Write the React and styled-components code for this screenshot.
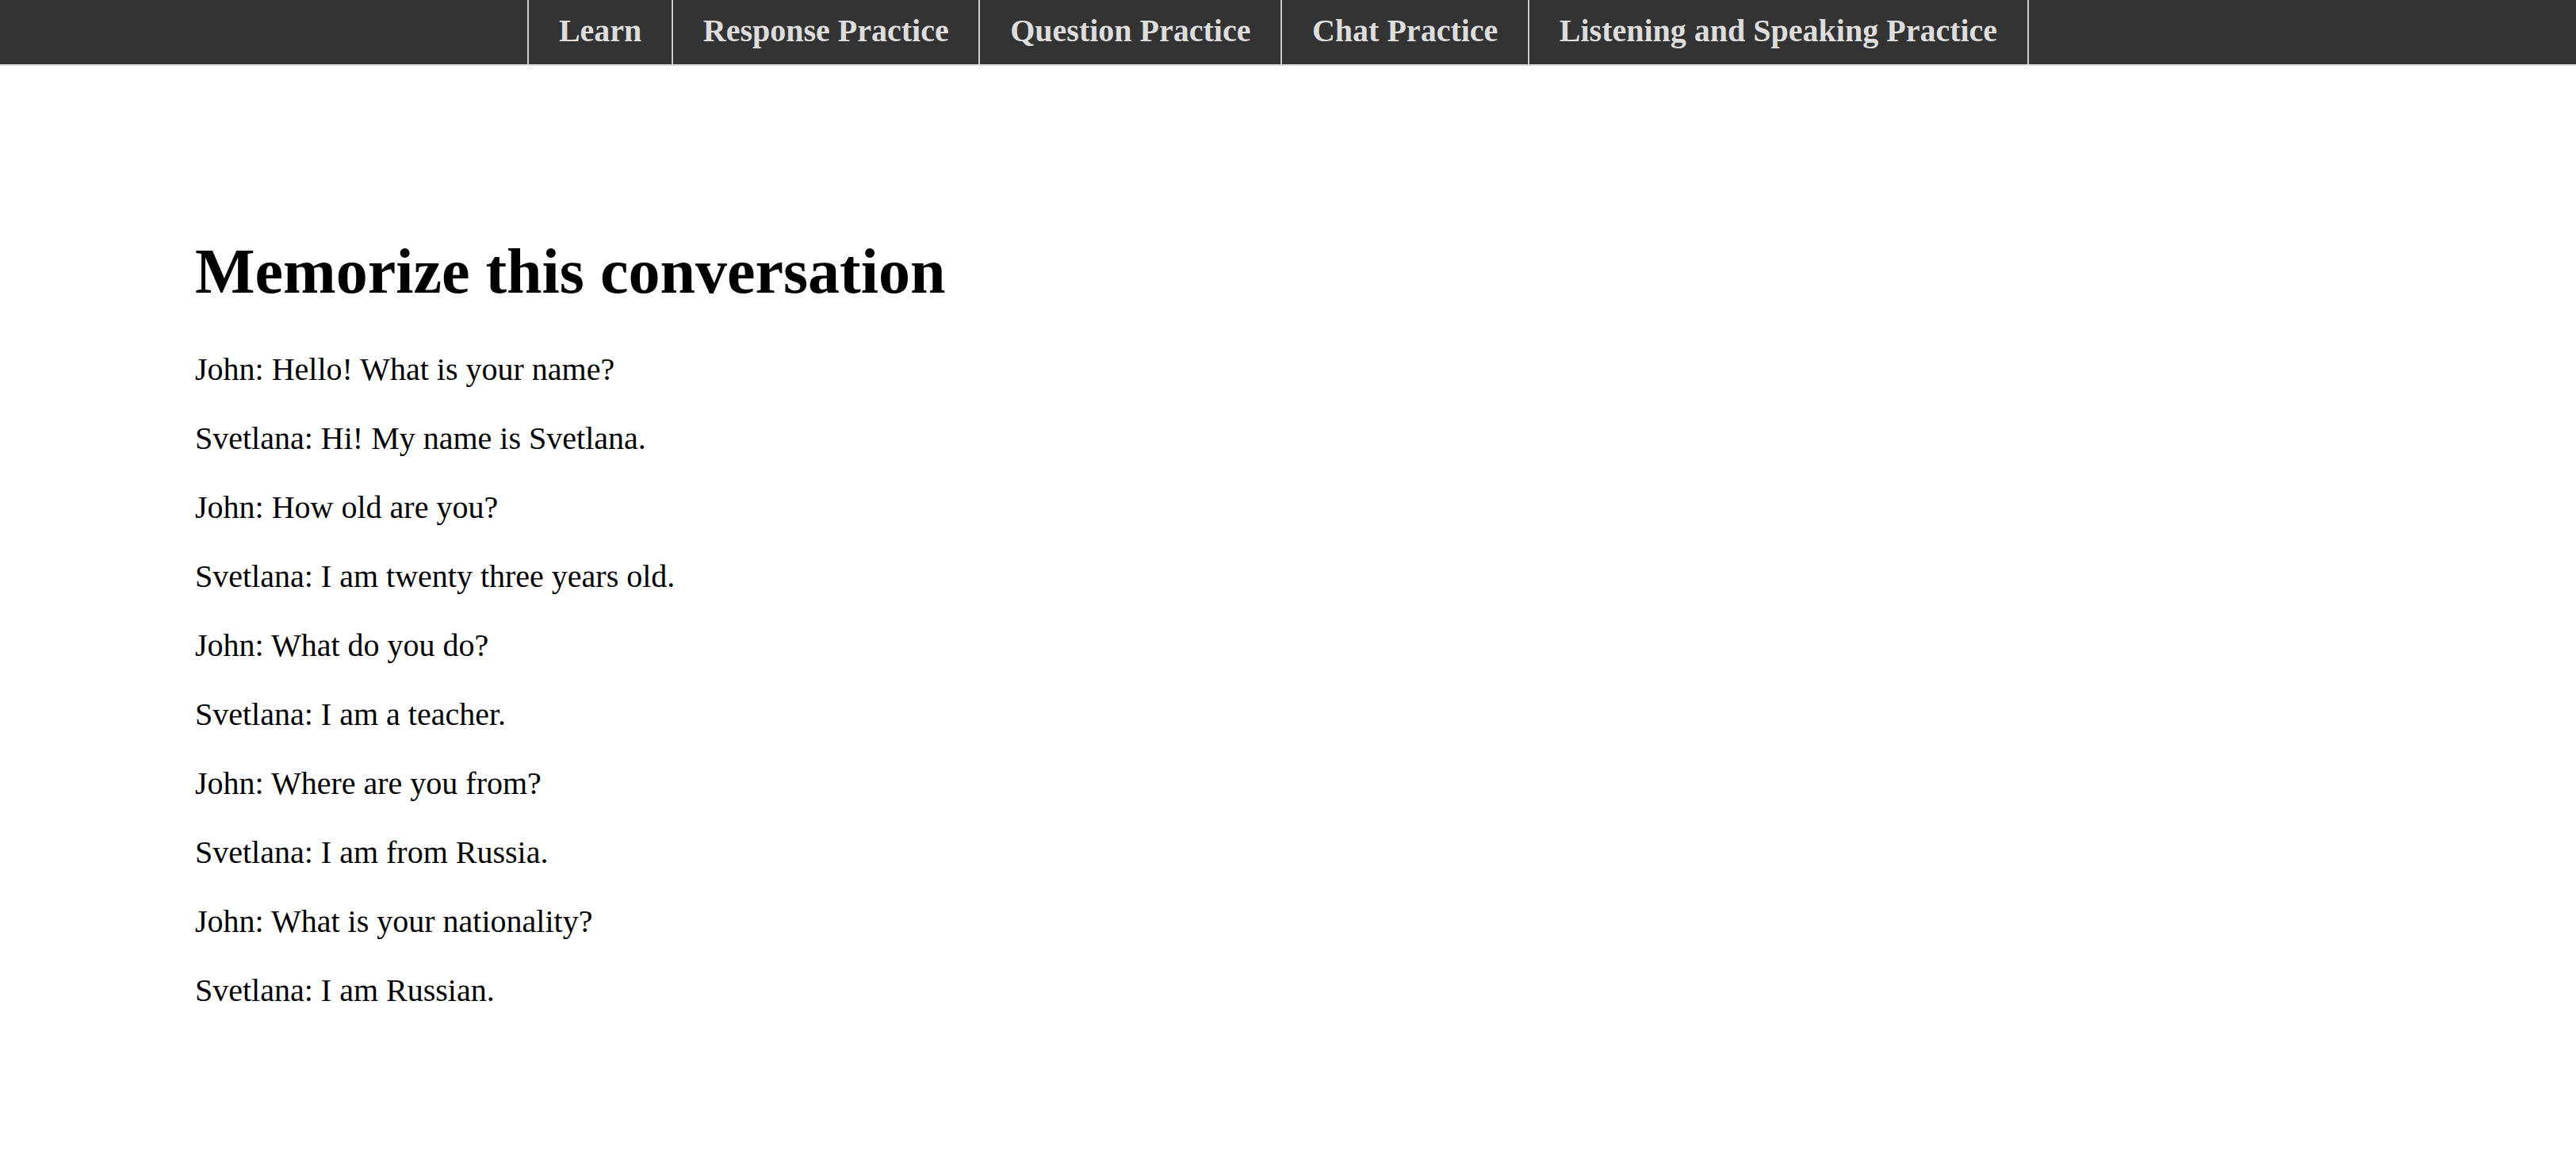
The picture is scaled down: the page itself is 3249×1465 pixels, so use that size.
import React from 'react';
import styled, { createGlobalStyle } from 'styled-components';

const links = [
  'Learn',
  'Response Practice',
  'Question Practice',
  'Chat Practice',
  'Listening and Speaking Practice',
];

const lines = [
  'John: Hello! What is your name?',
  'Svetlana: Hi! My name is Svetlana.',
  'John: How old are you?',
  'Svetlana: I am twenty three years old.',
  'John: What do you do?',
  'Svetlana: I am a teacher.',
  'John: Where are you from?',
  'Svetlana: I am from Russia.',
  'John: What is your nationality?',
  'Svetlana: I am Russian.',
];

const App = () => (
  <>
    <GlobalStyle />
    <NavBar>
      <NavList>
        {links.map((label, i) => (
          <NavItem key={label} isLast={i === links.length - 1}>
            <NavLink href="#">{label}</NavLink>
          </NavItem>
        ))}
      </NavList>
    </NavBar>
    <Main>
      <Title>Memorize this conversation</Title>
      {lines.map(line => (
        <Line key={line}>{line}</Line>
      ))}
    </Main>
  </>
);

const GlobalStyle = createGlobalStyle`
  html, body {
    margin: 0;
    padding: 0;
    background: #fff;
  }
  body {
    font-family: "Liberation Serif", "Times New Roman", serif;
    font-size: 40px;
    color: #000;
  }
`;

const NavBar = styled.nav`
  background: #333;
  height: 81px;
  border-bottom: 2px solid #ddd;
`;

const NavList = styled.ul`
  list-style: none;
  margin: 0;
  padding: 0 25px 0 0;
  height: 100%;
  display: flex;
  justify-content: center;
`;

const NavItem = styled.li`
  display: flex;
  border-left: 2px solid #ccc;
  border-right: ${({ isLast }) => (isLast ? '2px solid #ccc' : 'none')};
`;

const NavLink = styled.a`
  display: block;
  padding: 16px 37.75px 0;
  font-weight: bold;
  font-size: 40px;
  line-height: 46px;
  color: #ddd;
  text-decoration: none;
`;

const Main = styled.main`
  padding: 214px 0 0 246px;
`;

const Title = styled.h1`
  font-size: 80px;
  font-weight: bold;
  margin: 0 0 53.6px;
`;

const Line = styled.p`
  margin: 40px 0;
  font-size: 40px;
`;

export default App;
